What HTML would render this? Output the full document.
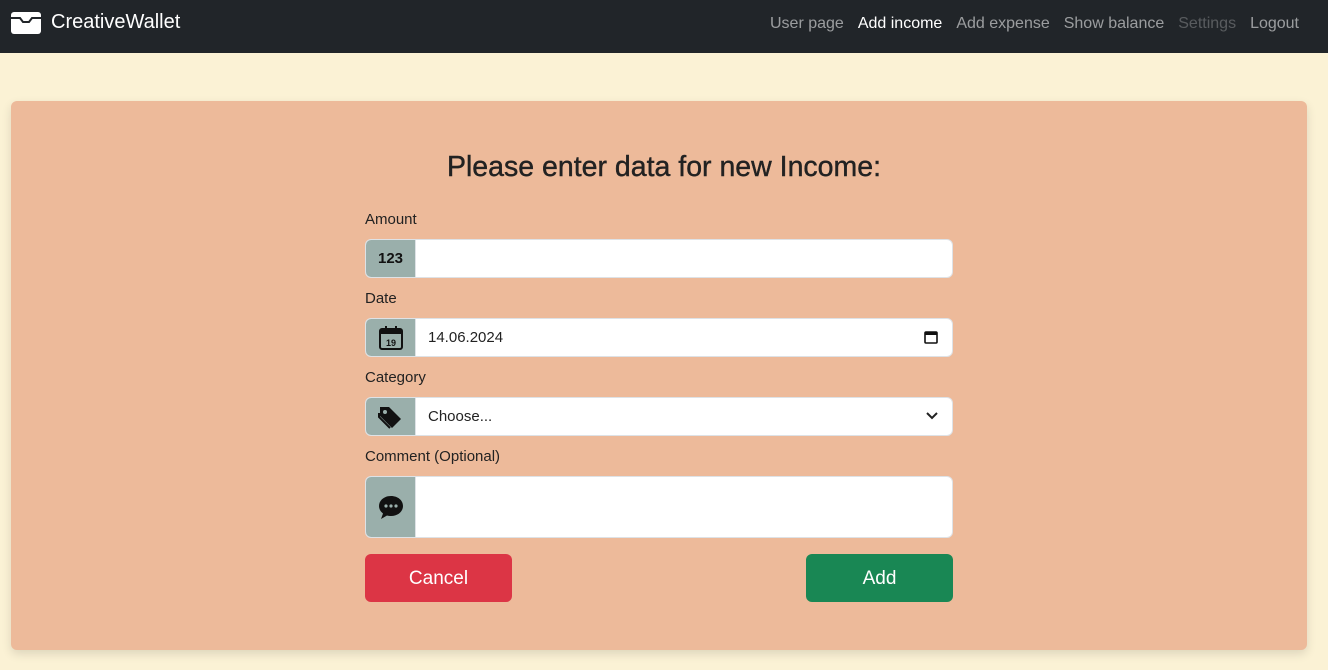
<!DOCTYPE html>
<html><head><style>
body{margin:0;width:1328px;height:670px;background:#fbf2d5;font-family:"Liberation Sans",sans-serif;overflow:hidden;position:relative}
nav{height:53px;background:#212529;position:relative}
.brand{position:absolute;left:11px;top:11px;color:#fff;font-size:20px;display:flex;align-items:center}
.brand svg{margin-right:10px}
.links{position:absolute;right:29px;top:15px;font-size:16px;color:rgba(255,255,255,.55)}
.links span{margin-left:14px}
.card{position:absolute;left:11px;top:101px;width:1296px;height:549px;background:#edba9a;border-radius:6px;box-shadow:0 4px 10px rgba(0,0,0,.12)}
h2{position:absolute;left:0;right:0;top:151px;margin:0;text-align:center;font-size:28.5px;font-weight:normal;color:#222;-webkit-text-stroke:0.4px #222}
.lab{position:absolute;left:365px;font-size:15px;color:#222}
.grp{position:absolute;left:365px;width:586px;height:37px;border:1px solid #dee2e6;border-radius:6px;background:#fff;overflow:hidden}
.ad{position:absolute;left:0;top:0;bottom:0;width:49px;background:#9aafab;display:flex;align-items:center;justify-content:center;font-size:15px;font-weight:bold;color:#111;border-right:1px solid #dee2e6}
.val{position:absolute;left:62px;top:10px;font-size:15px;color:#222}
.btn{position:absolute;top:554px;width:147px;height:48px;border-radius:6px;color:#fff;font-size:19px;display:flex;align-items:center;justify-content:center;padding-top:2px;box-sizing:border-box}
</style></head><body>
<nav><div class="brand"><svg width="30" height="22" viewBox="0 0 30 22"><rect x="0" y="0" width="30" height="22" rx="3" fill="#fff"/><path d="M0 6 H9 L12 10 H18 L21 6 H30" stroke="#212529" stroke-width="2" fill="none"/></svg>CreativeWallet</div>
<div class="links"><span>User page</span><span style="color:#fff">Add income</span><span>Add expense</span><span>Show balance</span><span style="color:rgba(255,255,255,.25)">Settings</span><span>Logout</span></div></nav>
<div class="card"></div>
<h2>Please enter data for new Income:</h2>
<div class="lab" style="top:211px">Amount</div>
<div class="grp" style="top:239px"><div class="ad">123</div></div>
<div class="lab" style="top:290px">Date</div>
<div class="grp" style="top:318px"><div class="ad"><svg width="26" height="26" viewBox="0 0 26 26"><rect x="2" y="4" width="22" height="20" rx="2" fill="none" stroke="#111" stroke-width="2"/><rect x="2" y="4" width="22" height="5" fill="#111"/><rect x="7" y="1" width="2" height="5" fill="#111"/><rect x="17" y="1" width="2" height="5" fill="#111"/><text x="13" y="21" font-size="9" text-anchor="middle" fill="#111" font-family="Liberation Sans">19</text></svg></div><div class="val">14.06.2024</div>
<svg style="position:absolute;right:14px;top:11px" width="14" height="14" viewBox="0 0 14 14"><rect x="1" y="2" width="12" height="11" rx="1" fill="none" stroke="#111" stroke-width="1.6"/><rect x="1" y="2" width="12" height="3" fill="#111"/></svg></div>
<div class="lab" style="top:369px">Category</div>
<div class="grp" style="top:397px"><div class="ad"><svg width="28" height="26" viewBox="0 0 28 26"><path d="M3 3 L12 3 L24 15 L15 24 L3 12 Z" fill="#111"/><circle cx="8" cy="8" r="2" fill="#9aafab"/><path d="M2 9 L2 13 L13 24" stroke="#111" stroke-width="2" fill="none"/></svg></div><div class="val">Choose...</div>
<svg style="position:absolute;right:14px;top:13px" width="12" height="10" viewBox="0 0 12 10"><path d="M1 2 L6 7 L11 2" stroke="#222" stroke-width="2" fill="none"/></svg></div>
<div class="lab" style="top:448px">Comment (Optional)</div>
<div class="grp" style="top:476px;height:60px"><div class="ad"><svg width="26" height="26" viewBox="0 0 26 26"><path d="M13 2 C6 2 1 6.5 1 12 C1 15 2.5 17.5 5 19.5 L3 25 L9 21.5 C10.3 21.9 11.6 22 13 22 C20 22 25 17.5 25 12 C25 6.5 20 2 13 2Z" fill="#111"/><circle cx="8" cy="12" r="1.6" fill="#9aafab"/><circle cx="13" cy="12" r="1.6" fill="#9aafab"/><circle cx="18" cy="12" r="1.6" fill="#9aafab"/></svg></div></div>
<div class="btn" style="left:365px;background:#dc3545">Cancel</div>
<div class="btn" style="left:806px;background:#198754">Add</div>
</body></html>
